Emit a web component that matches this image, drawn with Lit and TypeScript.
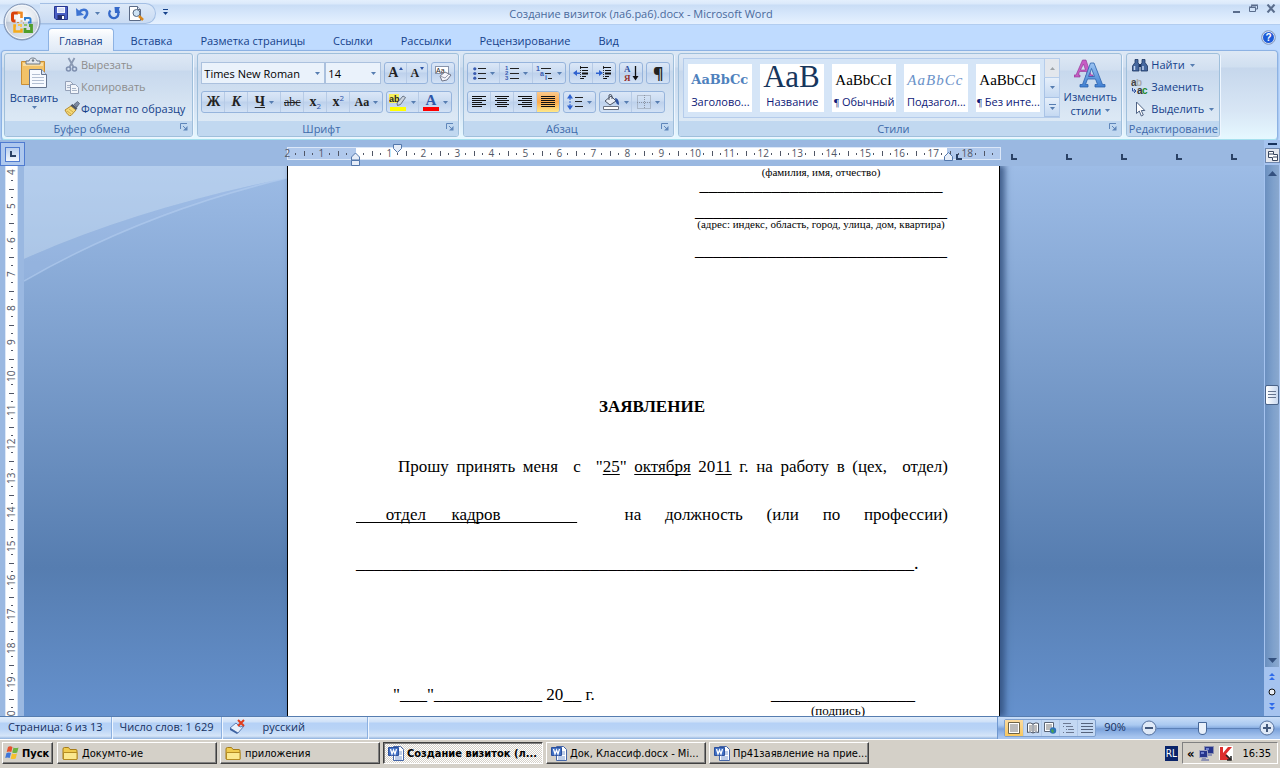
import { LitElement, html, svg, css, nothing, TemplateResult } from "lit";
import { customElement, property, state } from "lit/decorators.js";
import { classMap } from "lit/directives/class-map.js";

const icon = (w: number, h: number, body: unknown) =>
  html`<svg class="ico" width=${w} height=${h} viewBox="0 0 ${w} ${h}" aria-hidden="true">${body}</svg>`;

const caret = icon(5, 3, svg`<path d="M0 0h5L2.5 3z" fill="#567db1"/>`);

const officeLogo = icon(38, 38, svg`
  <defs>
    <radialGradient id="orb" cx=".5" cy=".35" r=".65">
      <stop offset="0" stop-color="#fff"/><stop offset=".55" stop-color="#e3e8ef"/><stop offset="1" stop-color="#98a9c2"/>
    </radialGradient>
    <linearGradient id="orbShade" x2="0" y2="1"><stop offset=".48" stop-color="#b9c2d0" stop-opacity="0"/><stop offset=".5" stop-color="#aab6c8" stop-opacity=".55"/><stop offset="1" stop-color="#fff" stop-opacity=".6"/></linearGradient>
  </defs>
  <circle cx="19" cy="19" r="18" fill="url(#orb)" stroke="#7d92b4"/>
  <circle cx="19" cy="19" r="16.5" fill="url(#orbShade)" stroke="#f5f8fc"/>
  <path d="M12.500 18H11q-1.500 0-1.500-1.500v-5q0-1.500 1.500-1.500h4" fill="none" stroke="#d9420c" stroke-width="3"/>
  <path d="M14.500 9.500l4 .5v5" fill="none" stroke="#f08a24" stroke-width="2.600"/>
  <path d="M22 17.500v-2.500h4q1.500 0 1.500 1.500v3H25" fill="none" stroke="#2f7fd0" stroke-width="2"/>
  <path d="M13 22.500h-1.500v6h7v-3" fill="none" stroke="#f5ab1c" stroke-width="2.500"/><path d="M15 22h3v2" fill="none" stroke="#f8c64e" stroke-width="2"/>
  <path d="M22 25v3.500h6.500v-6H26" fill="none" stroke="#4f9e2c" stroke-width="2.800"/><path d="M21 22h3" stroke="#8cc46b" stroke-width="2"/>
  <path d="M14 19.500h2M20 20h1M17.500 18h2" stroke="#c98a4a" stroke-width="1.200"/>`);

const saveIcon = icon(14, 14, svg`
  <path d="M.5.5h13v13H2L.5 12z" fill="#4a5fc4" stroke="#26358f"/>
  <path d="M3 1h8v6H3z" fill="#f3f6ff"/><path d="M4 3h6M4 5h6" stroke="#b9c3e6"/>
  <path d="M3.500 9h7v4.500h-7z" fill="#27316f"/><path d="M8 10h2v3H8z" fill="#fff"/>`);
const undoIcon = icon(14, 13, svg`
  <path d="M3 5.500C6 2 10 2 11 5c.6 2.500-.8 4.500-3 6.500" fill="none" stroke="#3d73d2" stroke-width="2.600"/>
  <path d="M0 1l.5 8L8 8z" fill="#3d73d2"/>`);
const redoIcon = icon(13, 13, svg`
  <path d="M2.500 3.500A4.500 4.500 0 1 0 9.500 4" fill="none" stroke="#3569c9" stroke-width="2.400"/>
  <path d="M6.500 0H12L11 2 12 6H7z" fill="#3569c9"/>`);
const previewIcon = icon(15, 15, svg`
  <path d="M.5.500h8l3 3v11H.5z" fill="#fff" stroke="#5a6a86"/><path d="M8.500.500v3h3" fill="#dce4f0" stroke="#5a6a86"/>
  <circle cx="7.500" cy="7" r="3.500" fill="#cfe3f4" stroke="#56677f"/><path d="M10 10l4 4" stroke="#d8861c" stroke-width="2.500"/>`);

const pasteIcon = icon(28, 32, svg`
  <path d="M1.500 4.500h23v23h-23z" fill="#f2c268" stroke="#c98e35"/><path d="M3 6h20v3H3z" fill="#f9dca0"/>
  <path d="M6 7V4h3c.5-4 7-4 8 0h3v3z" fill="#e4e8ee" stroke="#6b7684"/><circle cx="13" cy="3.500" r="1.200" fill="#6b7684"/>
  <path d="M9.500 12.500h12l5 5v13h-17z" fill="#f7faff" stroke="#66758f"/><path d="M21.500 12.500v5h5" fill="#d7e2f2" stroke="#66758f"/>
  <path d="M12 17.500h8M12 20.500h12M12 23.500h12M12 26.500h12" stroke="#b3bfd2"/>`);
const cutIcon = icon(16, 16, svg`
  <path d="M4.500 1l5 9M10.500 1l-5 9" stroke="#8a99b3" stroke-width="1.800" fill="none"/>
  <circle cx="4.500" cy="12" r="2" fill="none" stroke="#7f90b0" stroke-width="1.600"/><circle cx="10.500" cy="12" r="2" fill="none" stroke="#7f90b0" stroke-width="1.600"/>`);
const copyIcon = icon(16, 16, svg`
  <path d="M1.500 2.500h5l3 3v6h-8z" fill="#edf1f8" stroke="#94a1b8"/><path d="M3 6.500h4M3 8.500h4" stroke="#a9b5c8"/>
  <path d="M6.500 5.500h5l3 3v6h-8z" fill="#f3f6fb" stroke="#94a1b8"/><path d="M8 9.500h4M8 11.500h5" stroke="#a9b5c8"/>`);
const brushIcon = icon(16, 16, svg`
  <path d="M1 9l6-4 5 4-5 5.500q-3 1-6-5.500z" fill="#f4d979" stroke="#b58a2d"/><path d="M3 10l4 3M5 8l4 3" stroke="#c9a23e" stroke-width=".8"/>
  <path d="M6.500 4.500l2-1.500 5 4-1.500 2z" fill="#4c5666"/><path d="M10 3.500l3.500-3 2 2-2.500 3.500z" fill="#7d8ba3" stroke="#3b4658" stroke-width=".6"/>`);

const clearFormat = icon(18, 17, svg`
  <rect x="1.500" y="1.500" width="13" height="7" fill="#fff" stroke="#8794ab"/><text x="2" y="8" font-size="7" font-family="Liberation Sans" fill="#222">Aa</text>
  <path d="M6 11l5-4 6 3-4 5-5 1z" fill="#f5f5fa" stroke="#6f7587"/><path d="M6 11l5 2 4-4" fill="none" stroke="#9a9fb0"/>`);
const highlightIcon = icon(18, 17, svg`
  <path d="M0 0h10v9H0z" fill="#f6f05a"/><text x="0" y="8" font-size="9" font-family="Liberation Sans" font-weight="700" fill="#222">ab</text>
  <path d="M8 9l6-7 2.500 1.500-5 7-3 1z" fill="#cdd5df" stroke="#4f5a6c" stroke-width=".8"/><path d="M1 13h16v4H1z" fill="#ff0"/>`);
const fontColorIcon = icon(16, 17, svg`
  <text x="8" y="11" text-anchor="middle" font-size="15" font-weight="700" font-family="Liberation Serif" fill="#2f57a8">A</text><path d="M0 13h16v4H0z" fill="#f00"/>`);

const bulletsIcon = icon(13, 13, svg`
  <g fill="#3a5bb0"><circle cx="1.800" cy="1.800" r="1.600"/><circle cx="1.800" cy="6.500" r="1.600"/><circle cx="1.800" cy="11.200" r="1.600"/></g>
  <path d="M5 1.500h8M5 6.500h8M5 11.500h8" stroke="#222"/>`);
const numberIcon = icon(14, 14, svg`
  <g font-size="6" font-weight="700" font-family="Liberation Sans" fill="#3a5bb0"><text x="0" y="4">1</text><text x="0" y="9">2</text><text x="0" y="14">3</text></g>
  <path d="M5 2.500h9M5 7.500h9M5 12.500h9" stroke="#222"/>`);
const levelsIcon = icon(17, 14, svg`
  <g font-size="7" font-weight="700" font-family="Liberation Sans" fill="#3a5bb0"><text x="0" y="5">1</text><text x="4" y="10">a</text><text x="9" y="14">i</text></g>
  <path d="M5 2.500h10M9 7.500h6M12 12.500h4" stroke="#222"/>`);
const indentIcon = (flip: boolean) => icon(16, 14, svg`
  <path d="M7 1.500h8M9 4.500h6M9 10.500h4M7 12.500h4" stroke="#111"/><path d="M9 7.500h6" stroke="#111" stroke-width="2"/>
  <path d="M7.500 0v14" stroke="#333" stroke-dasharray="1 1"/>
  <path d=${flip ? "M0 6.500h3V4l4 3-4 3V8H0z" : "M7 6.500H4V4L0 7l4 3V8h3z"} fill="#2f62cf"/>`);
const sortIcon = icon(15, 17, svg`
  <g font-size="9" font-weight="700" font-family="Liberation Serif"><text x="0" y="7" fill="#2f4f9d">А</text><text x="0" y="16" fill="#96302c">Я</text></g>
  <path d="M11.500 1v12" stroke="#111" stroke-width="1.300"/><path d="M8.500 11h6l-3 4.500z" fill="#111"/>`);
const alignIcon = (spans: number[][]) => icon(14, 13, svg`${spans.map(
  ([a, b], i) => svg`<path d="M${a} ${i * 2 + 0.5}H${b}" stroke="#111"/>`)}`);
const L = [[0, 14], [0, 10], [0, 14], [0, 10], [0, 14], [0, 10]];
const C = [[0, 14], [2, 12], [0, 14], [2, 12], [0, 14], [2, 12]];
const R = [[0, 14], [4, 14], [0, 14], [4, 14], [0, 14], [4, 14]];
const J = [[0, 14], [0, 14], [0, 14], [0, 14], [0, 14], [0, 14]];
const spacingIcon = icon(16, 16, svg`
  <path d="M3 0l3 4.500H0zM3 16l3-4.500H0z" fill="#2f62cf"/><path d="M3 4v8" stroke="#2f62cf" stroke-dasharray="2 1"/>
  <path d="M8 3.500h8M8 7.500h7M8 12.500h8" stroke="#222"/>`);
const fillIcon = icon(17, 16, svg`
  <path d="M2 7l6-5 5 5-6 4z" fill="#e9eef6" stroke="#4c5566"/><path d="M6 6V1q2-2 3 1v3" fill="none" stroke="#4c5566"/>
  <path d="M12 4q4 0 4 7-3-1-3.500-4z" fill="#2d52a0"/><path d="M.5 12.500h15v3H.5z" fill="#fff" stroke="#6b7382"/>`);
const bordersIcon = icon(14, 14, svg`<path d="M.5.500h13v13H.5zM7.500 0v14M0 7.500h14" fill="none" stroke="#8b94a3" stroke-dasharray="1 1"/>`);

const changeStyles = icon(32, 30, svg`
  <defs><linearGradient id="blueA" x2="0" y2="1"><stop offset="0" stop-color="#9cc4f2"/><stop offset="1" stop-color="#3f7fd2"/></linearGradient></defs>
  <path d="M8.500 1h3.500l5 15h2v2h-7v-2h1.500l-1-3.500H5.500l-1 3.500H6v2H0v-2h2zM9.500 5l-3 6h5z" fill="#c65cc4" stroke="#8d3290" stroke-width=".6" fill-rule="evenodd"/>
  <path d="M16.500 4h3.500l8.500 21.500H31V28H21v-2.500h2.500L21.500 20h-8l-2 5.500H14V28H6v-2.500h2.500zM17.500 9.500L14.500 17.500h6z" fill="url(#blueA)" stroke="#2b62ad" stroke-width=".8" fill-rule="evenodd"/>`);
const findIcon = icon(16, 14, svg`
  <path d="M3 1.500h3v3l1 2v6.500H.5V8L3 4.500zM10 1.500h3v3L15.500 8v5H9V6.500l1-2z" fill="#45689f" stroke="#1d355f" stroke-width=".8"/>
  <path d="M7 6h2v3H7z" fill="#1d355f"/><path d="M2.500 8v4M11 8v4" stroke="#c2d5f2" stroke-width="1.500"/>`);
const replaceIcon = icon(17, 16, svg`
  <g font-size="10" font-weight="700" font-family="Liberation Sans"><text x="0" y="7" fill="#444">a</text><text x="5" y="7" fill="#aaa">b</text><text x="6" y="15" fill="#333">a</text><text x="11" y="15" fill="#1f8a2d">c</text></g>
  <path d="M1.500 9v3h3M3 10l2 2-2 2" fill="none" stroke="#2f4f9d"/>`);
const pointerIcon = icon(12, 16, svg`<path d="M2.500 1v11.500l2.800-2.500 2 5 2-1-2-4.500h3.500z" fill="#fff" stroke="#4f6384"/>`);
const launcher = icon(8, 8, svg`<path d="M.5 6V.500H7" fill="none" stroke="#5f86ba"/><path d="M3 3l3 3" stroke="#5f86ba"/><path d="M7.500 3v4.500H3z" fill="#5f86ba"/>`);
const helpIcon = icon(15, 15, svg`
  <circle cx="7.500" cy="7.500" r="6.800" fill="#dfe9f8" stroke="#7f93b8"/><circle cx="7.500" cy="7.500" r="5.500" fill="#1d5bd8"/>
  <text x="7.500" y="11" text-anchor="middle" font-size="10" font-weight="700" font-family="Liberation Sans" fill="#fff">?</text>`);

const folderIcon = icon(17, 15, svg`
  <path d="M1 13V3q0-1.500 1.500-1.500h4L8 3.500h6q1 0 1 1.500v8z" fill="#f0cb4e" stroke="#a67c18"/>
  <path d="M1.500 13.500V6.500h13.500v7z" fill="#fbe88e" stroke="#b58c22"/>`);
const wordIcon = icon(16, 16, svg`
  <path d="M5.500 1.500h7l3 3v11h-10z" fill="#fff" stroke="#4566a8"/><path d="M11 7h3M11 9h3M7 12h7M7 14h7" stroke="#7d9bd0"/>
  <path d="M.5 2.500h10v8H.5z" fill="#3f6fc4" stroke="#2c509c"/><path d="M2.500 4l1.500 5 1.500-4 1.500 4L8.500 4" fill="none" stroke="#fff" stroke-width="1.300"/>`);
const flagIcon = icon(15, 14, svg`
  <path d="M3 1q2-1.500 4.500 0L6.300 6Q4 5 1.700 6z" fill="#e5502c"/><path d="M8.500 1.500q2 1 5 0L12.200 6.500q-3 1-5 0z" fill="#6db33f"/>
  <path d="M1.500 7q2.500-1 4.500 0L4.700 12Q2.500 11 .2 12z" fill="#3f76d8"/><path d="M7 7.500q2.500 1 5 0L10.700 12.500q-3 1-5 0z" fill="#f6c02d"/>`);
const spellIcon = icon(17, 15, svg`
  <path d="M1 9l6-5 4 4 4-1-6 7z" fill="#e8f0fb" stroke="#5e7fb5"/><path d="M1 9v2l7 4 1-1" fill="#3a5f9f"/>
  <path d="M9 1l6 6M15 1L9 7" stroke="#e03c1c" stroke-width="2"/>`);
const networkIcon = icon(15, 16, svg`
  <path d="M5.500 1.500h9v7h-9z" fill="#26348c" stroke="#8a8fae"/><path d="M7 3h3v2H7z" fill="#6f80cf"/><path d="M9 9h4v2H9z" fill="#8d92b4"/>
  <path d="M.5 5.500h8v7h-8z" fill="#26348c" stroke="#a0a4c2"/><path d="M2 7h3v2H2z" fill="#6f80cf"/><path d="M3 13h4v1h3v2H2z" fill="#8d92b4"/>`);
const kasperskyIcon = icon(14, 15, svg`
  <path d="M0 0h14v14H0z" fill="#fff"/><path d="M1 1h3v6l5-6h4L7 8l6 6H1z" fill="#dd2c2c"/><path d="M7 9l5 5M12 10v4H8" stroke="#222" stroke-width="1.500" fill="none"/>`);

const viewIcons = [
  icon(12, 12, svg`<path d="M.5.500h11v11H.5z" fill="#fff" stroke="#6d6346"/><path d="M2 3h8M2 5h8M2 7h8M2 9h8" stroke="#777"/>`),
  icon(12, 12, svg`<path d="M.5 1.500Q3 0 6 2q3-2 5.500-.5v9Q9 9 6 11 3 9 .5 10.500zM6 2v9" fill="#fff" stroke="#4d5768"/><path d="M2 4h3M2 6h3M2 8h3M7 4h3M7 6h3M7 8h3" stroke="#777"/>`),
  icon(13, 12, svg`<path d="M.5.500h9v9h-9z" fill="#fff" stroke="#5a6475"/><path d="M2 3h6M2 5h6M2 7h4" stroke="#777"/><circle cx="9" cy="8.500" r="3.200" fill="#2f73b8"/><path d="M7 8l2-1 1 3-2 1z" fill="#4aa24a"/>`),
  icon(12, 12, svg`<path d="M0 1.500h8M3 4.500h7M5 7.500h6M3 10.500h8" stroke="#6b7891"/><path d="M0 4.500h1M3 7.500h1M0 10.500h1" stroke="#6b7891"/>`),
  icon(12, 12, svg`<path d="M0 1.500h12M0 4.500h12M0 7.500h12M0 10.500h12" stroke="#55637c"/>`),
];

@customElement("ribbon-group")
class RibbonGroup extends LitElement {
  @property() label = "";
  @property({ type: Boolean }) dialog = false;
  static styles = css`
    :host { display: flex; flex-direction: column; flex: none; border: 1px solid #9fbfdb; border-radius: 3px; overflow: hidden;
      box-shadow: 1px 1px 0 #eef6ff; background: linear-gradient(#dee8f5, #d1dff0 16px, #c7d8ed 17px, #dae7f4 60px, #e0ecf7); }
    .body { flex: 1; display: flex; min-height: 0; }
    .foot { display: flex; align-items: center; justify-content: center; position: relative; height: 15px; background: #c1d8f0; color: #3e6aaa; }
    .foot.dialog { padding-right: 14px; }
    .foot button { position: absolute; right: 4px; top: 2px; padding: 0; border: 0; background: none; line-height: 0; }
  `;
  render() {
    return html`<div class="body"><slot></slot></div>
      <div class=${classMap({ foot: true, dialog: this.dialog })}><span>${this.label}</span>${this.dialog
        ? html`<button aria-label="Параметры: ${this.label}">${launcher}</button>` : nothing}</div>`;
  }
}

@customElement("app-root")
class AppRoot extends LitElement {
  @state() tab = 0;
  @state() zoom = 90;

  static styles = css`
    :host { display: flex; flex-direction: column; height: 100vh; overflow: hidden; background: #bfdbff;
      font: 11px/16px "Open Sans", "Noto Sans", sans-serif; color: #15428b; }
    * { box-sizing: border-box; }
    button { font: inherit; color: inherit; background: none; border: 0; padding: 0; margin: 0; white-space: nowrap; }
    .ico { display: block; flex: none; }

    .title { display: flex; align-items: center; height: 25px; flex: none; position: relative; border-bottom: 1px solid #b2cdf0;
      background: linear-gradient(#e4effd, #dbe9fb 4px, #c9ddf6 5px, #d7e7fb 14px, #e6f1ff); }
    .orb { position: absolute; left: 3px; top: 3px; z-index: 2; border-radius: 50%; }
    .quick { display: flex; align-items: center; height: 21px; margin: 2px 0 0 40px; padding: 0 10px 0 14px; gap: 8px; width: 116px;
      border: 1px solid #a3bfe4; border-left: 0; border-radius: 0 11px 11px 0; background: linear-gradient(#dde9f8, #c9dbf3); }
    .quick .caret-gap { margin-left: -3px; }
    .more { margin: 0 0 0 7px; }
    .caption { flex: 1; text-align: center; line-height: 16px; padding: 4px 166px 0 0; color: #4a6a9c; white-space: nowrap; }
    .window { position: absolute; right: 4px; top: 2px; display: flex; gap: 8px; align-items: center; }

    .tabs { display: flex; flex: none; height: 25px; gap: 6px; padding: 3px 4px 0 48px; align-items: stretch; }
    .tab { padding: 0 10px; border: 1px solid transparent; border-bottom: 0; border-radius: 4px 4px 0 0; line-height: 19px; margin-bottom: -1px; z-index: 1; }
    .tab.on { background: linear-gradient(#fff, #f0f5fb 8px, #e1eaf6); border-color: #8db2e3; }
    .tabs .help { margin: 2px 0 0 auto; align-self: flex-start; }

    .ribbon { display: flex; flex: none; gap: 4px; height: 90px; margin: 0 2px 0 1px; padding: 2px; border: 1px solid #8db2e3; border-bottom-color: #a5e0ee; border-radius: 4px;
      background: linear-gradient(#dde8f5, #d0dff0 16px, #c6d7ec 17px, #d8e6f5 60px, #e6f8ff); overflow: hidden; box-shadow: 0 1px 2px #7398cb; }
    .big { display: flex; flex-direction: column; align-items: center; line-height: 13px; }
    .col { display: flex; flex-direction: column; }
    .cmd { display: flex; align-items: center; height: 22px; gap: 1px; text-align: left; }
    .cmd .pic { width: 17px; display: flex; justify-content: center; }
    .cmd span + .ico { margin-left: 2px; }
    .cmd[disabled] { color: #8d8d8d; }
    .clip { padding: 0 7px 0 4px; gap: 4px; }
    .clip .big { width: 50px; padding-top: 3px; gap: 2px; }
    .body { display: flex; }

    .rows { display: flex; flex-direction: column; gap: 7px; padding: 8px 3px 0; }
    .row { display: flex; gap: 3px; }
    .set { display: flex; height: 22px; border: 1px solid #96b4dc; border-radius: 3px; background: linear-gradient(#dbe7f7, #cadbf1 9px, #bdd1ec 10px, #d3e2f5); overflow: hidden; }
    .set button { display: flex; align-items: center; justify-content: center; gap: 4px; width: 22px; color: #222; }
    .set button + button { border-left: 1px solid #b7cbe6; width: 23px; }
    .set button.wide { width: 31px; }
    .set button + button.wide { width: 33px; }
    .set button.tight { width: 21px; gap: 1px; }
    .set button.on { background: linear-gradient(#fbc98b, #fba94c 10px, #fee889); }
    .serif { font-family: "Liberation Serif", serif; font-weight: 700; font-size: 14px; }
    .ital { font-style: italic; }
    .und { text-decoration: underline; }
    .strike { text-decoration: line-through; font-size: 12px; font-weight: 400; }
    .script { font-size: 8px; line-height: 8px; color: #2f57a8; }
    .small { font-size: 12px; }
    .pilcrow { font-size: 16px; font-weight: 700; }
    .combo { display: flex; align-items: center; position: relative; height: 22px; border: 1px solid #abc1de; background: #eaf2fb; }
    .combo select { appearance: none; border: 0; background: none; width: 100%; height: 20px; padding: 0 2px; font: 11px "Open Sans", "Noto Sans", sans-serif; color: #000; }
    .combo .ico { position: absolute; right: 4px; top: 9px; pointer-events: none; }
    .family { width: 124px; margin-right: -3px; } .size { width: 56px; }

    .styles { gap: 2px; padding: 4px 3px 0 4px; }
    .gallery { display: flex; height: 60px; border: 1px solid #b5cceb; background: #d5e5f7; }
    .tiles { display: flex; gap: 8px; padding: 5px 4px; }
    .tile { display: flex; flex-direction: column; width: 64px; height: 48px; background: #fff; overflow: hidden; padding: 1px 0; }
    .tile .sample { height: 30px; line-height: 30px; overflow: hidden; padding-left: 3px; text-align: left; font-family: "Liberation Serif", serif; font-size: 15px; color: #000; }
    .tile .name { font-size: 11px; line-height: 14px; color: #0e1a78; text-align: center; }
    .tile .name i { font: 11px/14px "Liberation Serif", serif; }
    .tile .sample.h { color: #4f81bd; font-weight: 700; font-family: "DejaVu Serif", serif; font-size: 13px; }
    .tile .sample.t { color: #17365d; font-size: 31px; line-height: 24px; }
    .tile .sample.s { color: #6b92c9; font-style: italic; letter-spacing: 1px; }
    .scrolls { display: flex; flex-direction: column; width: 15px; }
    .scrolls button { flex: 1; display: flex; align-items: center; justify-content: center; border-left: 1px solid #a9c3e6; border-bottom: 1px solid #a9c3e6; background: linear-gradient(#e6effa, #c5d9f2); }
    .scrolls .off { background: #e9e9ea; opacity: .7; }
    .styles .big { width: 56px; gap: 0; padding-top: 1px; }
    .styles .big span { margin-top: 1px; }
    .twoline { display: flex; align-items: center; gap: 4px; }
    .edit { padding: 0 4px; width: 92px; }
    .edit .cmd { gap: 3px; }

    .work { flex: 1; min-height: 0; display: grid; grid-template-columns: 24px 1fr 16px; grid-template-rows: 26px 1fr; background: #9ab8e1; }
    .corner { display: flex; align-items: center; justify-content: center; width: 25px; height: 24px; margin-top: 2px; border: 1px solid #4f7bd0; background: #aec8ee; z-index: 1; }
    .corner button { width: 15px; height: 15px; border: 1px solid #4f7bd0; background: linear-gradient(#b9cfee, #f2f6fc); display: grid; place-items: center; }
    .hruler { display: flex; justify-content: center; padding-top: 7px; min-width: 0; overflow: hidden; font: 10px/13px "Open Sans", "Noto Sans", sans-serif; color: #505666; }
    .scale { position: relative; flex: none; width: 714px; height: 13px; border: 1px solid #dbe7f8; background: linear-gradient(90deg, #b1c9ec 68px, #fff 68px, #fff 659px, #b1c9ec 659px); }
    .units { display: flex; margin-left: -5px; line-height: 11px; width: 714px; overflow: hidden; }
    .unit { display: grid; grid-template-columns: repeat(4, 1fr); width: 34px; flex: none; align-items: center; justify-items: center; height: 11px; }
    .unit b { width: 14px; margin: 0 -3px; font-weight: 400; text-align: center; }
    .dot { width: 1px; height: 2px; background: #505666; }
    .tick { width: 1px; height: 5px; background: #505666; }
    .mark { position: absolute; left: 0; top: -6px; }
    .vruler { margin: 0 6px 0 5px; background: #fff; border: solid #dbe7f8; border-width: 0 1px; overflow: hidden; font: 10px/11px "Open Sans", "Noto Sans", sans-serif; color: #505666; }
    .vunit { display: grid; grid-template-rows: repeat(4, 1fr); height: 34px; justify-items: center; align-items: center; }
    .vunit b { writing-mode: vertical-rl; transform: rotate(180deg); font-weight: 400; height: 14px; margin: -3px 0; text-align: center; }
    .vunit .dot { width: 2px; height: 1px; } .vunit .tick { width: 5px; height: 1px; }
    .vruler { padding-top: 2px; }

    .canvas { position: relative; display: flex; justify-content: center; overflow: hidden; background: linear-gradient(#9dbce6, #567db0 73%, #6591cd); }
    .wave { position: absolute; left: 0; top: 0; width: 390px; height: 120px; }
    .page { position: relative; flex: none; width: 713px; margin-right: 1px; height: 100%; overflow: hidden; background: #fff; border: solid #000; border-width: 0 1px; padding: 0 50px 0 68px;
      font: 17px/20px "Liberation Serif", serif; color: #000; box-shadow: 4px 0 6px 1px #2e4c7acc; }
    .head { width: 252px; margin-left: 339px; text-align: center; }
    .fine { font-size: 11px; line-height: 12px; white-space: nowrap; }
    .rule { font-size: 18px; white-space: nowrap; }
    .head .rule { line-height: 14px; }
    .h1 { height: 26px; } .h2 { height: 14px; } .h3 { height: 28px; padding-top: 13px; }
    h1 { font: 700 17px/20px "Liberation Serif", serif; text-align: center; margin: 139px 0 40px; width: 592px; }
    .line { width: 592px; height: 48px; margin: 0; text-align-last: justify; }
    .first { padding-left: 42px; }
    u { text-underline-offset: 2px; }
    .blank { display: inline-block; text-decoration: underline; text-decoration-skip-ink: none; text-underline-offset: 2px; text-align-last: left; white-space: pre; }
    .first u { text-decoration-skip-ink: none; }
    .plain { text-align-last: left; height: 131px; white-space: nowrap; }
    .sign { display: flex; justify-content: space-between; width: 559px; padding-left: 37px; align-items: flex-start; line-height: 20px; white-space: nowrap; }
    .sign .fine { font-size: 13px; line-height: 13px; text-align: center; padding-right: 10px; }

    .vscroll { grid-column: 3; grid-row: 1 / 3; display: flex; flex-direction: column; align-items: center; background: #a5c3ef; }
    .split { height: 8px; width: 16px; display: grid; place-items: center; }
    .split i { width: 9px; height: 2px; background: #17325c; }
    .rulerbtn { width: 15px; height: 15px; border: 1px solid #6f87ad; background: #e4e7ee; display: grid; place-items: center; }
    .track { flex: 1; width: 14px; margin-top: 2px; display: grid; grid-template-rows: 16px 1fr 14px; justify-items: center; align-items: center; background: linear-gradient(90deg, #6a8fbf, #7fa1cc 60%, #8aa8ce); }
    .thumb { width: 14px; height: 20px; align-self: start; margin-top: 204px; border: 1px solid #4a6389; border-radius: 2px; background: linear-gradient(90deg, #fff, #c9d9f0); display: grid; place-items: center; }
    .jump { height: 49px; display: flex; flex-direction: column; justify-content: space-between; align-items: center; padding: 6px 0; }

    .status { display: flex; flex: none; height: 23px; align-items: stretch; line-height: 21px; color: #15305f; border-top: 1px solid #567db0;
      background: linear-gradient(#e3eefb, #cfe1f8 5px, #b5d1f6 6px, #b9d4f6 12px, #d6e5f8 19px, #8fb1dd 22px); white-space: nowrap; }
    .seg { display: flex; align-items: center; padding: 0 8px; border-right: 1px solid #8cb0e0; box-shadow: 1px 0 0 #eff6ff; }
    .seg, .pct { padding-bottom: 3px; }
    .langs { gap: 16px; padding-left: 7px; padding-right: 62px; }
    .right { display: flex; align-items: center; margin-left: auto; padding: 0 5px 0 6px; border-left: 1px solid #6f97cf; background: linear-gradient(#c9ddf7, #aac9f1 8px, #7ba2db 12px, #a7c5ef 20px); }
    .views { display: flex; height: 18px; border: 1px solid #7d9fce; border-radius: 2px; background: #c3d8f3; }
    .views button { display: grid; place-items: center; width: 18px; }
    .views button + button { border-left: 1px solid #b0c8e8; }
    .views button.on { background: linear-gradient(#fbdba0, #f8c75e); }
    .pct { width: 38px; text-align: center; margin: 0 7px 0 0; }
    .round { display: grid; place-items: center; }
    input[type="range"] { appearance: none; width: 102px; height: 16px; margin: 0; background: linear-gradient(#5c81b8, #5c81b8) center / 100% 1px no-repeat; }
    input[type="range"]::-webkit-slider-thumb { appearance: none; width: 9px; height: 13px; background: #e8f0fa; border: 1px solid #456697; border-radius: 1px 1px 5px 5px; }

    .task { display: flex; flex: none; height: 29px; padding: 2px 2px 4px; gap: 4px; background: #d4d0c8; border-top: 1px solid #fff; color: #000; font: 11px/16px "DejaVu Sans Condensed", "DejaVu Sans", sans-serif; align-items: stretch; }
    .task button { display: flex; align-items: center; gap: 3px; padding: 0 4px; flex: none; border: 1px solid; border-color: #fff #404040 #404040 #fff; box-shadow: inset -1px -1px 0 #808080; }
    .task button span, .task time { padding-top: 2px; }
    .task button.app { width: 160px; margin-right: -1px; overflow: hidden; }
    .task button.start { width: 51px; font-weight: 700; padding: 0 2px; gap: 2px; }
    .task button.on { font-weight: 700; border-color: #404040 #fff #fff #404040; box-shadow: inset 1px 1px 0 #808080; background: repeating-conic-gradient(#fff 0 25%, #d4d0c8 0 50%) 0 0 / 2px 2px; }
    .task .lang { margin-left: auto; align-self: center; padding: 0 1px; line-height: 15px; background: #0a246a; color: #fff; font-size: 10px; }
    .tray { display: flex; align-items: center; gap: 5px; padding: 0 6px 0 4px; border: 1px solid; border-color: #808080 #fff #fff #808080; }
    .tray b { font-size: 13px; line-height: 13px; }
    .tray time { margin-left: 4px; }
  `;

  private group(items: [TemplateResult, string, string?][]) {
    return html`<div class="set">${items.map(([body, label, cls]) =>
      html`<button class=${cls ?? ""} title=${label} aria-label=${label}>${body}</button>`)}</div>`;
  }

  private tile(cls: string, sample: string, name: string, linked = false) {
    return html`<button class="tile"><span class="sample ${cls}">${sample}</span><span class="name">${linked ? html`<i>¶</i> ` : nothing}${name}</span></button>`;
  }

  private tabStop(x: number, y: number) {
    return svg`<path d="M${x} ${y}v5h5" fill="none" stroke="#2b4266" stroke-width="2"/>`;
  }

  private ruler() {
    const nums = ["2", "1", "", ...Array.from({ length: 18 }, (_, i) => String(i + 1))];
    return html`<div class="hruler"><div class="scale">
      <div class="units">${nums.map((n) => html`<div class="unit"><b>${n}</b><i class="dot"></i><i class="tick"></i><i class="dot"></i></div>`)}</div>
      <svg class="mark" width="980" height="24" viewBox="0 0 980 24">
        <path d="M105.500 2.500h8v4l-4 4-4-4z" fill="#e6edf8" stroke="#5377ab"/>
        <path d="M63.500 18v-3l4-4 4 4v3zM63.500 18.500h8v5h-8z" fill="#e6edf8" stroke="#5377ab"/>
        <path d="M656.500 18.500v-4l4-4 4 4v4z" fill="#e6edf8" stroke="#5377ab"/>
        ${[669, 724, 779, 834, 889, 944].map((x) => this.tabStop(x, 12))}
      </svg>
    </div></div>`;
  }

  private page() {
    const u = (n: number) => "_".repeat(n);
    return html`<main class="page">
      <div class="head">
        <div class="fine">(фамилия, имя, отчество)</div>
        <div class="rule h1">${u(27)}</div>
        <div class="rule h2">${u(28)}</div>
      </div>
      <div class="head">
        <div class="fine">(адрес: индекс, область, город, улица, дом, квартира)</div>
        <div class="rule h3">${u(28)}</div>
      </div>
      <h1>ЗАЯВЛЕНИЕ</h1>
      <p class="line first">Прошу принять меня&nbsp; с&nbsp; "<u>25</u>" <u>октября</u> 20<u>11</u> г. на работу в (цех,&nbsp; отдел)</p>
      <p class="line"><span class="blank">       отдел      кадров                  </span>&nbsp; на должность (или по профессии)</p>
      <p class="line plain rule">${u(62)}.</p>
      <div class="sign">
        <span>"<span class="rule">${u(3)}</span>"<span class="rule">${u(12)}</span> 20<span class="rule">${u(2)}</span> г.</span>
        <div><div class="rule">${u(16)}</div><div class="fine">(подпись)</div></div>
      </div>
    </main>`;
  }

  render() {
    const tabs = ["Главная", "Вставка", "Разметка страницы", "Ссылки", "Рассылки", "Рецензирование", "Вид"];
    const vnums = Array.from({ length: 17 }, (_, i) => i + 4);
    return html`
      <header class="title">
        <button class="orb" aria-label="Кнопка Office">${officeLogo}</button>
        <div class="quick">
          <button aria-label="Сохранить">${saveIcon}</button><button aria-label="Отменить">${undoIcon}</button>
          <span class="caret-gap">${caret}</span>
          <button aria-label="Повторить">${redoIcon}</button><button aria-label="Просмотр">${previewIcon}</button>
        </div>
        <button class="more" aria-label="Настройка панели">${icon(5, 6, svg`<path d="M0 .5h5" stroke="#15428b"/><path d="M0 3h5L2.500 6z" fill="#15428b"/>`)}</button>
        <div class="caption">Создание визиток (ла6.ра6).docx - Microsoft Word</div>
        <div class="window">
          <button aria-label="Свернуть">${icon(9, 12, svg`<path d="M1 10h7" stroke="#5a6d8c" stroke-width="2"/>`)}</button>
          <button aria-label="Восстановить">${icon(9, 9, svg`<path d="M.5 3.500h6v4h-6zM2.500 3V1.500h6V5H7" fill="none" stroke="#5a6d8c"/><path d="M0 3h7M2 1h7" stroke="#5a6d8c"/>`)}</button>
          <button aria-label="Закрыть">${icon(10, 9, svg`<path d="M1.500.500l7 8M8.500.500l-7 8" stroke="#5a6d8c" stroke-width="2"/>`)}</button>
        </div>
      </header>
      <nav class="tabs">
        ${tabs.map((t, i) => html`<button class=${classMap({ tab: true, on: i === this.tab })} @click=${() => (this.tab = i)}>${t}</button>`)}
        <button class="help" aria-label="Справка">${helpIcon}</button>
      </nav>
      <section class="ribbon">
        <ribbon-group label="Буфер обмена" dialog>
          <div class="body clip">
            <button class="big">${pasteIcon}<span>Вставить</span>${caret}</button>
            <div class="col">
              <button class="cmd" disabled><span class="pic">${cutIcon}</span>Вырезать</button>
              <button class="cmd" disabled><span class="pic">${copyIcon}</span>Копировать</button>
              <button class="cmd"><span class="pic">${brushIcon}</span>Формат по образцу</button>
            </div>
          </div>
        </ribbon-group>
        <ribbon-group label="Шрифт" dialog>
          <div class="rows">
            <div class="row">
              <label class="combo family"><select aria-label="Шрифт"><option>Times New Roman</option></select>${caret}</label>
              <label class="combo size"><select aria-label="Размер шрифта"><option>14</option></select>${caret}</label>
              ${this.group([
                [html`<span class="serif">A</span><svg width="4" height="12"><path d="M0 3h4L2 0z" fill="#2f57a8"/></svg>`, "Увеличить размер", "tight"],
                [html`<span class="serif small">A</span><svg width="4" height="12"><path d="M0 0h4L2 3z" fill="#2f57a8"/></svg>`, "Уменьшить размер", "tight"],
              ])}
              ${this.group([[clearFormat, "Очистить формат"]])}
            </div>
            <div class="row">
              ${this.group([
                [html`<span class="serif">Ж</span>`, "Полужирный"],
                [html`<span class="serif ital">К</span>`, "Курсив"],
                [html`<span class="serif und">Ч</span>${caret}`, "Подчеркнутый", "wide"],
                [html`<span class="serif strike">abc</span>`, "Зачеркнутый"],
                [html`<span><span class="serif">x</span><sub class="script">2</sub></span>`, "Подстрочный"],
                [html`<span><span class="serif">x</span><sup class="script">2</sup></span>`, "Надстрочный"],
                [html`<span class="serif small">Aa</span>${caret}`, "Регистр", "wide"],
              ])}
              ${this.group([[html`${highlightIcon}${caret}`, "Выделение", "wide"], [html`${fontColorIcon}${caret}`, "Цвет текста", "wide"]])}
            </div>
          </div>
        </ribbon-group>
        <ribbon-group label="Абзац" dialog>
          <div class="rows">
            <div class="row">
              ${this.group([[html`${bulletsIcon}${caret}`, "Маркеры", "wide"], [html`${numberIcon}${caret}`, "Нумерация", "wide"], [html`${levelsIcon}${caret}`, "Многоуровневый список", "wide"]])}
              ${this.group([[indentIcon(false), "Уменьшить отступ"], [indentIcon(true), "Увеличить отступ"]])}
              ${this.group([[sortIcon, "Сортировка"]])}
              ${this.group([[html`<span class="pilcrow">¶</span>`, "Непечатаемые знаки"]])}
            </div>
            <div class="row">
              ${this.group([[alignIcon(L), "По левому краю"], [alignIcon(C), "По центру"], [alignIcon(R), "По правому краю"], [alignIcon(J), "По ширине", "on"]])}
              ${this.group([[html`${spacingIcon}${caret}`, "Интервал", "wide"]])}
              ${this.group([[html`${fillIcon}${caret}`, "Заливка", "wide"], [html`${bordersIcon}${caret}`, "Границы", "wide"]])}
            </div>
          </div>
        </ribbon-group>
        <ribbon-group label="Стили" dialog>
          <div class="body styles">
            <div class="gallery">
              <div class="tiles">
                ${this.tile("h", "AaBbCc", "Заголово...")} ${this.tile("t", "АаВ", "Название")}
                ${this.tile("", "AaBbCcI", "Обычный", true)} ${this.tile("s", "AaBbCc", "Подзагол...")}
                ${this.tile("", "AaBbCcI", "Без инте...", true)}
              </div>
              <div class="scrolls">
                <button class="off" aria-label="Вверх">${icon(5, 3, svg`<path d="M0 3h5L2.500 0z" fill="#888"/>`)}</button>
                <button aria-label="Вниз">${caret}</button>
                <button aria-label="Дополнительно">${icon(7, 6, svg`<path d="M0 .5h7" stroke="#567db1"/><path d="M1 3h5L3.500 6z" fill="#567db1"/>`)}</button>
              </div>
            </div>
            <button class="big">${changeStyles}<span>Изменить</span><span class="twoline">стили ${caret}</span></button>
          </div>
        </ribbon-group>
        <ribbon-group label="Редактирование">
          <div class="col edit">
            <button class="cmd"><span class="pic">${findIcon}</span><span>Найти</span>${caret}</button>
            <button class="cmd"><span class="pic">${replaceIcon}</span><span>Заменить</span></button>
            <button class="cmd"><span class="pic">${pointerIcon}</span><span>Выделить</span>${caret}</button>
          </div>
        </ribbon-group>
      </section>
      <section class="work">
        <div class="corner"><button aria-label="Табуляция">${icon(6, 6, svg`<path d="M1 0v5h5" fill="none" stroke="#2b4266" stroke-width="2"/>`)}</button></div>
        ${this.ruler()}
        <div class="vscroll">
          <div class="split"><i></i></div>
          <button class="rulerbtn" aria-label="Линейка">${icon(11, 11, svg`<path d="M1.500 1.500h5v3h4v6h-5v-3h-4zM3 3v2M5 3v2M7 6v2M9 6v2" fill="#fff" stroke="#39465e"/>`)}</button>
          <div class="track">
            ${icon(9, 5, svg`<path d="M0 5h9L4.500 0z" fill="#34517f"/>`)}
            <div class="thumb">${icon(8, 8, svg`<path d="M0 .5h8M0 3.500h8M0 6.500h8" stroke="#66758f"/>`)}</div>
            ${icon(9, 5, svg`<path d="M0 0h9L4.500 5z" fill="#34517f"/>`)}
          </div>
          <div class="jump">
            ${icon(6, 7, svg`<path d="M0 3h6L3 0zM0 7h6L3 4z" fill="#2f6bea"/>`)}
            ${icon(8, 8, svg`<circle cx="4" cy="4" r="3" fill="#e8edf5" stroke="#111"/>`)}
            ${icon(6, 7, svg`<path d="M0 0h6L3 3zM0 4h6L3 7z" fill="#2f6bea"/>`)}
          </div>
        </div>
        <div class="vruler">${vnums.map((n) => html`<div class="vunit"><b>${n}</b><i class="dot"></i><i class="tick"></i><i class="dot"></i></div>`)}</div>
        <div class="canvas">
          <svg class="wave" viewBox="0 0 390 120" aria-hidden="true">
            <path d="M0 0h263v12Q115 42 0 93z" fill="#d7e6f8" fill-opacity=".42"/>
            <path d="M0 93Q115 42 263 12Q120 46 0 115z" fill="#a9c5ea" fill-opacity=".3"/>
            <path d="M0 115Q120 46 263 12" fill="none" stroke="#b5cff0" stroke-opacity=".6" stroke-width="1.500"/>
          </svg>
          ${this.page()}
        </div>
      </section>
      <footer class="status">
        <span class="seg">Страница: 6 из 13</span><span class="seg">Число слов: 1 629</span>
        <span class="seg langs">${spellIcon}<span>русский</span></span>
        <div class="right">
          <div class="views">${viewIcons.map((v, i) => html`<button class=${i ? "" : "on"} aria-label="Режим ${i + 1}">${v}</button>`)}</div>
          <span class="pct">${this.zoom}%</span>
          <button class="round" aria-label="Уменьшить">${icon(16, 16, svg`<circle cx="8" cy="8" r="7" fill="#dfe9f7" stroke="#55719e"/><path d="M4 8h8" stroke="#44597c" stroke-width="2"/>`)}</button>
          <input type="range" aria-label="Масштаб" min="10" max="190" .value=${String(this.zoom)} @input=${(e: Event) => (this.zoom = +(e.target as HTMLInputElement).value)} />
          <button class="round" aria-label="Увеличить">${icon(16, 16, svg`<circle cx="8" cy="8" r="7" fill="#dfe9f7" stroke="#55719e"/><path d="M4 8h8M8 4v8" stroke="#44597c" stroke-width="2"/>`)}</button>
        </div>
      </footer>
      <footer class="task">
        <button class="start">${flagIcon}<span>Пуск</span></button>
        <button class="app">${folderIcon}<span>Докумто-ие</span></button>
        <button class="app">${folderIcon}<span>приложения</span></button>
        <button class="app on">${wordIcon}<span>Создание визиток (л...</span></button>
        <button class="app">${wordIcon}<span>Док, Классиф.docx - Mi...</span></button>
        <button class="app">${wordIcon}<span>Пр41заявление на прие...</span></button>
        <span class="lang">RL</span>
        <div class="tray"><b>«</b>${networkIcon}${kasperskyIcon}<time>16:35</time></div>
      </footer>`;
  }
}
